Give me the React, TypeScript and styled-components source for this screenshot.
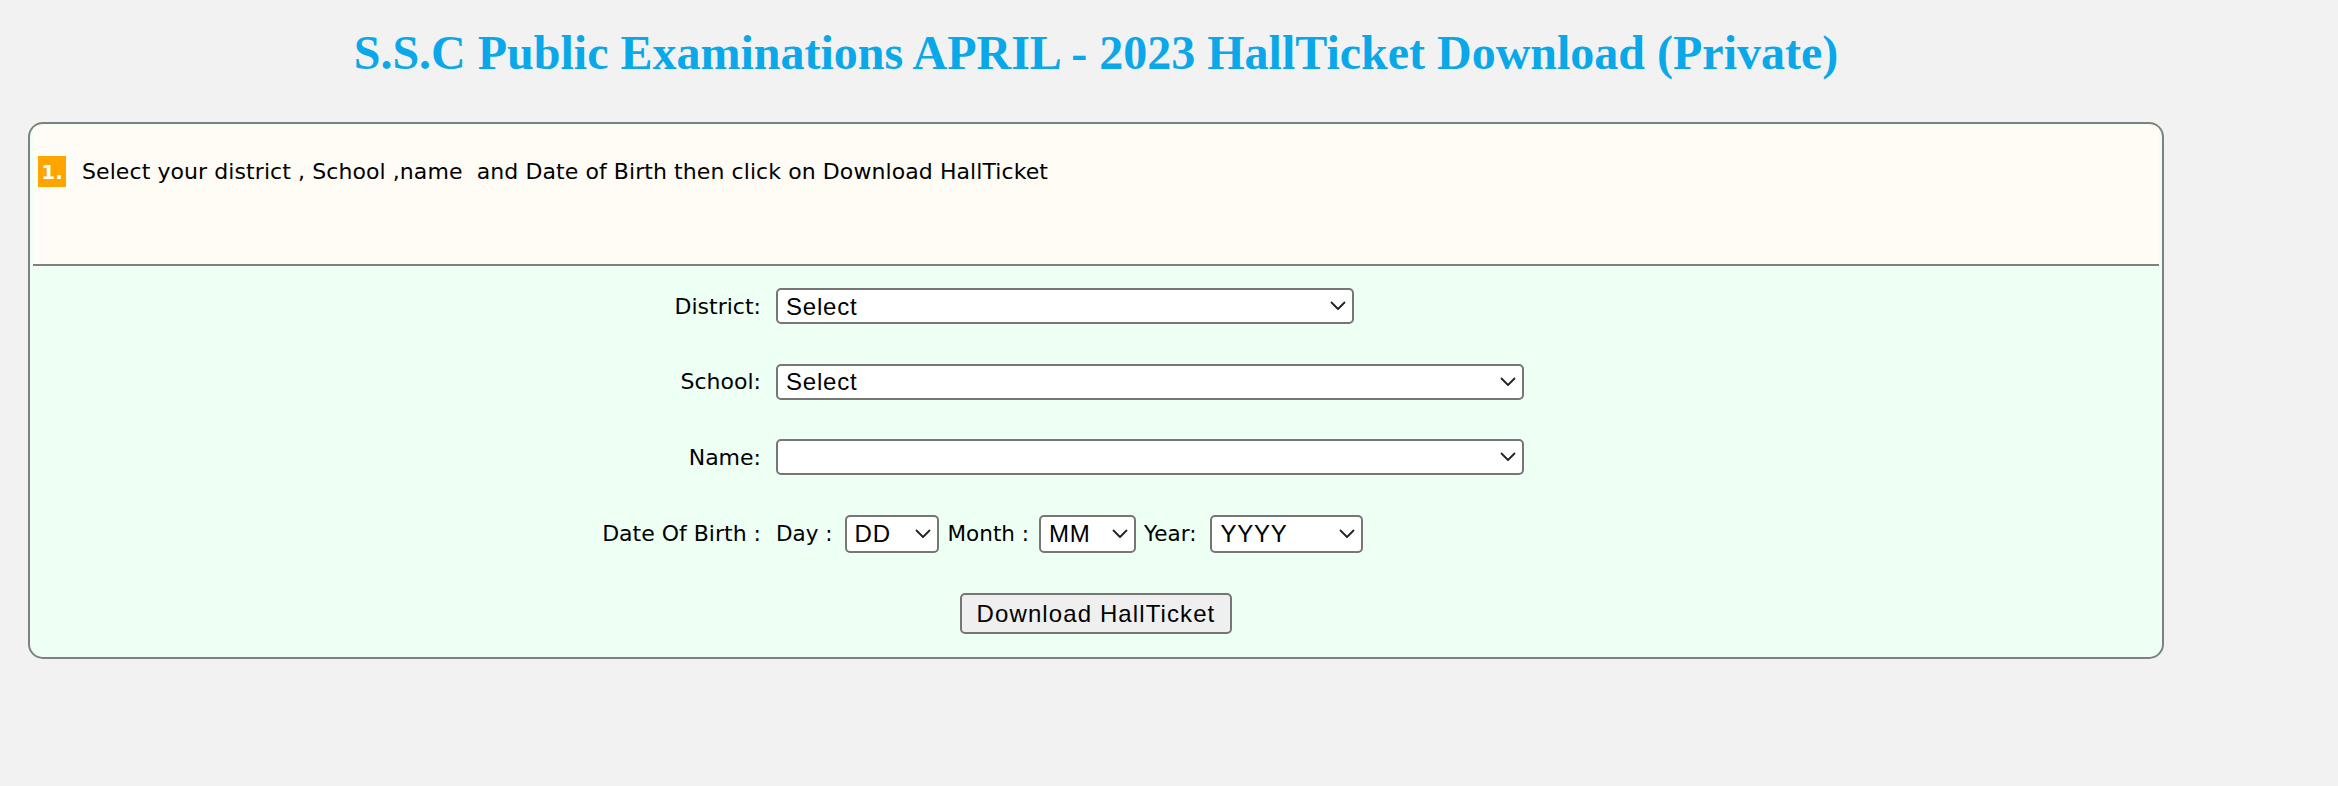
import React from "react";
import styled, { createGlobalStyle } from "styled-components";

const GlobalStyle = createGlobalStyle`
  html, body {
    margin: 0;
    padding: 0;
    background: #f2f2f2;
  }
  body {
    font-family: "DejaVu Sans", Verdana, sans-serif;
    color: #000;
  }
`;

const Page = styled.div`
  width: 2136px;
  padding: 26px 0 0 28px;
`;

const Title = styled.h1`
  margin: 0 0 43px;
  font-family: "Liberation Serif", "Times New Roman", serif;
  font-weight: bold;
  font-size: 48px;
  line-height: 53px;
  color: #0aa8e8;
  text-align: center;
`;

const Panel = styled.div`
  box-sizing: border-box;
  width: 2136px;
  border: 2px solid #808080;
  border-radius: 15px;
  background: #eefff3;
  padding: 1px 3px 0 3px;
  overflow: hidden;
`;

const Header = styled.div`
  box-sizing: border-box;
  height: 141px;
  background: #fffcf5;
  padding: 31px 0 0 5px;
  border-bottom: 2px solid #808080;
`;

const HeaderRow = styled.div`
  display: flex;
  align-items: center;
  gap: 16px;
  height: 31px;
`;

const StepBadge = styled.span`
  display: inline-flex;
  align-items: center;
  justify-content: center;
  width: 28px;
  height: 31px;
  background: #ffa500;
  color: #fff;
  font-weight: bold;
  font-size: 20px;
`;

const Instruction = styled.span`
  font-size: 22px;
  letter-spacing: 0.08px;
  white-space: pre;
`;

const Form = styled.div`
  display: grid;
  grid-template-columns: 176px 831px;
  column-gap: 15px;
  row-gap: 39.5px;
  justify-content: center;
  align-items: center;
  padding: 22px 0 23px;
`;

const Label = styled.span`
  font-size: 22px;
  text-align: right;
  white-space: nowrap;
`;

const SelectWrap = styled.span<{ $w: number; $h?: number }>`
  position: relative;
  display: inline-flex;
  width: ${(p) => p.$w}px;
  height: ${(p) => p.$h ?? 36}px;
  flex: none;
`;

const Select = styled.select`
  appearance: none;
  -webkit-appearance: none;
  box-sizing: border-box;
  width: 100%;
  height: 100%;
  margin: 0;
  padding: 0 30px 0 8px;
  border: 2px solid #767676;
  border-radius: 5px;
  background: #fff;
  color: #000;
  font-family: "Liberation Sans", Arial, sans-serif;
  font-size: 24px;
  letter-spacing: 0.8px;
  outline: none;
`;

const Chevron = styled.svg`
  position: absolute;
  right: 8px;
  top: 50%;
  width: 16px;
  height: 10px;
  margin-top: -5px;
  pointer-events: none;
`;

const DobRow = styled.div`
  display: flex;
  align-items: center;
`;

const DobLabel = styled.span<{ $gap: number }>`
  font-size: 21.5px;
  white-space: pre;
  margin-right: ${(p) => p.$gap}px;
`;

const DobSpacer = styled.span<{ $w: number }>`
  width: ${(p) => p.$w}px;
  flex: none;
`;

const ButtonRow = styled.div`
  grid-column: 1 / -1;
  display: flex;
  justify-content: center;
  margin-top: 1px;
`;

const DownloadButton = styled.button`
  box-sizing: border-box;
  width: 272px;
  height: 41px;
  padding: 0;
  border: 2px solid #767676;
  border-radius: 5px;
  background: #efefef;
  color: #000;
  font-family: "Liberation Sans", Arial, sans-serif;
  font-size: 24px;
  letter-spacing: 1.1px;
  cursor: pointer;
`;

function Dropdown({
  w,
  h,
  value,
}: {
  w: number;
  h?: number;
  value: string;
}) {
  return (
    <SelectWrap $w={w} $h={h}>
      <Select defaultValue={value}>
        <option value={value}>{value}</option>
      </Select>
      <Chevron viewBox="0 0 16 10" aria-hidden="true">
        <path
          d="M1.5 1.5 L8 8 L14.5 1.5"
          fill="none"
          stroke="#222"
          strokeWidth="1.8"
          strokeLinecap="round"
          strokeLinejoin="round"
        />
      </Chevron>
    </SelectWrap>
  );
}

export default function App() {
  return (
    <>
      <GlobalStyle />
      <Page>
        <Title>S.S.C Public Examinations APRIL - 2023 HallTicket Download (Private)</Title>
        <Panel>
          <Header>
            <HeaderRow>
              <StepBadge>1.</StepBadge>
              <Instruction>
                {"Select your district , School ,name  and Date of Birth then click on Download HallTicket"}
              </Instruction>
            </HeaderRow>
          </Header>
          <Form>
            <Label>District:</Label>
            <div>
              <Dropdown w={578} value="Select" />
            </div>
            <Label>School:</Label>
            <div>
              <Dropdown w={748} value="Select" />
            </div>
            <Label>Name:</Label>
            <div>
              <Dropdown w={748} value="" />
            </div>
            <Label>Date Of Birth :</Label>
            <DobRow>
              <DobLabel $gap={12}>Day :</DobLabel>
              <Dropdown w={94} h={38} value="DD" />
              <DobSpacer $w={9} />
              <DobLabel $gap={10}>Month :</DobLabel>
              <Dropdown w={97} h={38} value="MM" />
              <DobSpacer $w={8} />
              <DobLabel $gap={14}>Year:</DobLabel>
              <Dropdown w={153} h={38} value="YYYY" />
            </DobRow>
            <ButtonRow>
              <DownloadButton>Download HallTicket</DownloadButton>
            </ButtonRow>
          </Form>
        </Panel>
      </Page>
    </>
  );
}
